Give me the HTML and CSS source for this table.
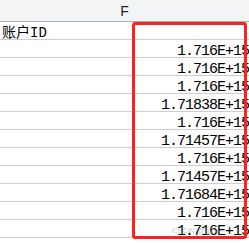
FILE: index.html
```html
<!DOCTYPE html>
<html lang="zh-CN">
  <head>
    <meta charset="UTF-8" />
    <title>账户ID</title>
    <link rel="stylesheet" href="styles.css">
  </head>
  <body>
    <div id="sheet">
      <div class="col-head">F</div>
      <div class="cell text">账户ID</div>
      <div class="cell">1.716E+15</div>
      <div class="cell">1.716E+15</div>
      <div class="cell">1.716E+15</div>
      <div class="cell">1.71838E+15</div>
      <div class="cell">1.716E+15</div>
      <div class="cell">1.71457E+15</div>
      <div class="cell">1.716E+15</div>
      <div class="cell">1.71457E+15</div>
      <div class="cell">1.71684E+15</div>
      <div class="cell">1.716E+15</div>
      <div class="cell">1.716E+15</div>
      <!-- marked column -->
      <div class="mark"></div>
      <div class="stamp">CSDN @gyxy</div>
    </div>
  </body>
</html>
```

FILE: styles.css
```css
body {
  margin: 0;
  background: #ffffff;
}
#sheet {
  position: relative;
  width: 249px;
  height: 243px;
  overflow: hidden;
  display: flex;
  flex-direction: column;
}
.col-head {
  height: 21px;
  flex: none;
  background: #f3f4f6;
  border-bottom: 1px solid #a9aeb8;
  color: #222222;
  font-family: "Liberation Sans", sans-serif;
  font-size: 14px;
  line-height: 22px;
  text-align: center;
}
.cell {
  flex: none;
  box-sizing: border-box;
  height: 18px;
  padding-top: 7px;
  border-bottom: 1px solid #c9cdd6;
  font-family: "Liberation Mono", "Noto Sans CJK SC", monospace;
  font-size: 15px;
  letter-spacing: -1px;
  line-height: 9px;
  color: #000000;
  text-align: right;
  white-space: nowrap;
}
.cell.text {
  text-align: left;
  padding-left: 2px;
  font-size: 14px;
  letter-spacing: 0;
}
.mark {
  position: absolute;
  left: 132px;
  top: 22px;
  width: 115px;
  height: 217px;
  box-sizing: border-box;
  border: 3px solid #ff2020;
  border-radius: 3px;
}
.stamp {
  position: absolute;
  left: 172px;
  top: 226px;
  font-family: "Liberation Sans", sans-serif;
  font-size: 8px;
  color: rgba(150, 150, 150, 0.5);
}
```
